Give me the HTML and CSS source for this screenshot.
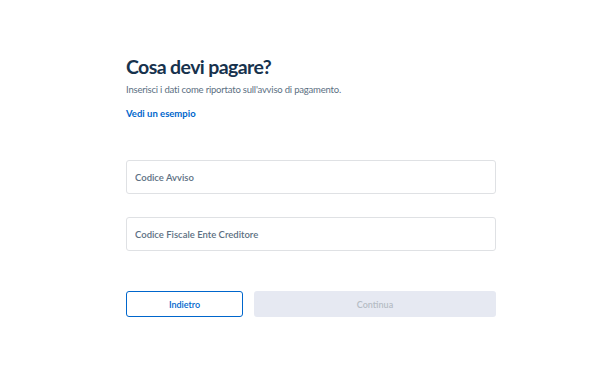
FILE: index.html
```html
<!DOCTYPE html>
<html lang="it">
<head>
  <meta charset="UTF-8" />
  <meta name="viewport" content="width=device-width, initial-scale=1" />
  <title>Cosa devi pagare?</title>
  <link rel="stylesheet" href="styles.css">
</head>
<body>

<main class="form-box">
  <h1>Cosa devi pagare?</h1>
  <p class="intro">Inserisci i dati come riportato sull'avviso di pagamento.</p>
  <a class="example-link" href="#">Vedi un esempio</a>

  <div class="fields">
    <input type="text" class="field" placeholder="Codice Avviso" />
    <input type="text" class="field" placeholder="Codice Fiscale Ente Creditore" />
  </div>

  <div class="actions">
    <button class="btn btn-back">Indietro</button>
    <button class="btn btn-next" disabled>Continua</button>
  </div>
</main>

</body>
</html>
```

FILE: styles.css
```css
body {
  font-family: Lato, "Noto Sans", sans-serif;
  margin: 0;
  background: #fff;
  color: #17324d;
}
.form-box {
  width: 370px;
  margin: 0 0 0 126px;
  padding-top: 55px;
}
h1 {
  font-size: 19.5px;
  font-weight: 700;
  margin: 0;
  line-height: 24px;
  letter-spacing: -0.6px;
  color: #17324d;
}
.intro {
  font-size: 9.5px;
  color: #5c6f82;
  margin: 4px 0 0;
  line-height: 14px;
  letter-spacing: -0.2px;
}
.example-link {
  display: inline-block;
  margin-top: 10px;
  font-size: 9.5px;
  font-weight: 700;
  color: #0066cc;
  text-decoration: none;
  line-height: 14px;
}
.fields {
  margin-top: 39px;
  display: flex;
  flex-direction: column;
  gap: 23px;
}
.field {
  height: 34px;
  box-sizing: border-box;
  border: 1px solid #dfe1e4;
  border-radius: 3px;
  padding: 0 8px;
  font-family: inherit;
  font-size: 9.5px;
  font-weight: 600;
  outline: none;
}
.field::placeholder {
  color: #5c6f82;
}
.actions {
  margin-top: 40px;
  display: flex;
  gap: 11px;
}
.btn {
  height: 26px;
  box-sizing: border-box;
  border-radius: 3px;
  font-family: inherit;
  font-size: 9px;
  font-weight: 600;
}
.btn-back {
  width: 117px;
  background: #fff;
  border: 1px solid #0066cc;
  color: #0066cc;
}
.btn-next {
  flex: 1;
  background: #e6e9f2;
  border: none;
  color: #b5bcc4;
}
```
